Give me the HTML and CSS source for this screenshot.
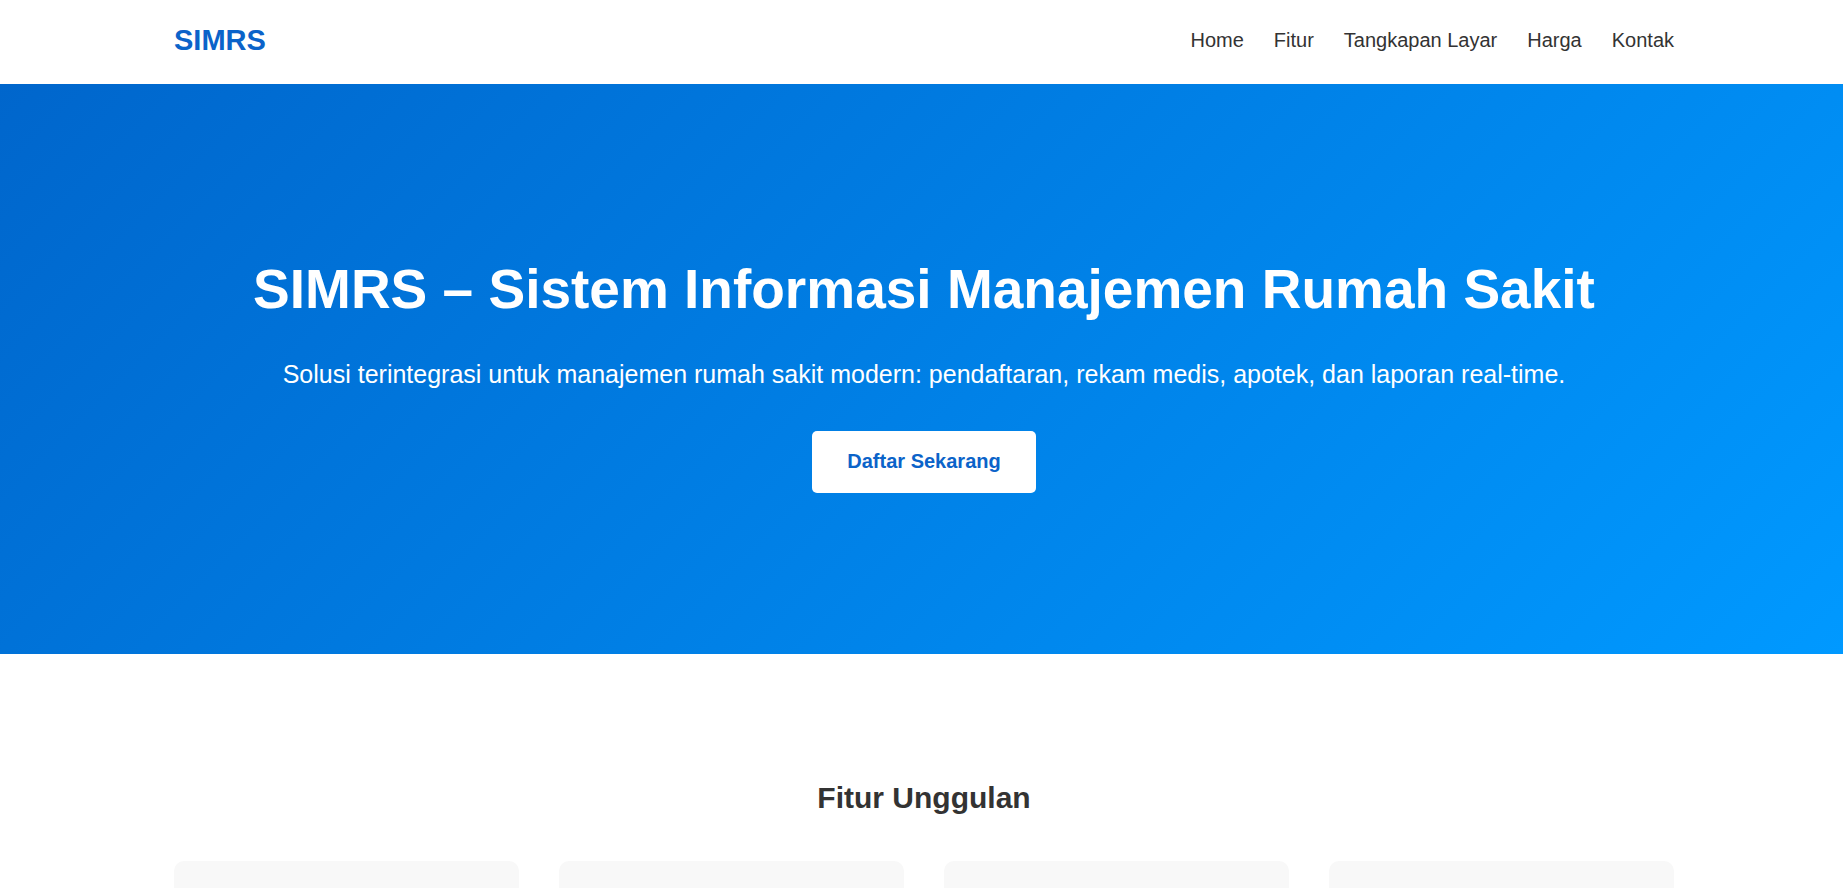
FILE: index.html
```html
<!DOCTYPE html>
<html lang="id">
<head>
<meta charset="utf-8">
<title>SIMRS – Sistem Informasi Manajemen Rumah Sakit</title>
<link rel="stylesheet" href="styles.css">
</head>
<body>
<header class="site-header">
  <div class="container header-inner">
    <a class="logo" href="#">SIMRS</a>
    <nav class="nav">
      <a href="#">Home</a>
      <a href="#">Fitur</a>
      <a href="#">Tangkapan Layar</a>
      <a href="#">Harga</a>
      <a href="#">Kontak</a>
    </nav>
  </div>
</header>
<section class="hero">
  <div class="container hero-inner">
    <h1 class="hero-title">SIMRS – Sistem Informasi Manajemen Rumah Sakit</h1>
    <p class="hero-sub">Solusi terintegrasi untuk manajemen rumah sakit modern: pendaftaran, rekam medis, apotek, dan laporan real-time.</p>
    <a class="btn" href="#">Daftar Sekarang</a>
  </div>
</section>
<section class="features">
  <div class="container">
    <h2 class="section-title">Fitur Unggulan</h2>
    <div class="feature-grid">
      <div class="card"><h3>Pendaftaran Pasien</h3><p>Registrasi pasien rawat jalan dan rawat inap dengan cepat.</p></div>
      <div class="card"><h3>Rekam Medis Elektronik</h3><p>Riwayat medis pasien tersimpan aman dan mudah diakses.</p></div>
      <div class="card"><h3>Manajemen Apotek</h3><p>Kelola stok obat, resep, dan transaksi farmasi.</p></div>
      <div class="card"><h3>Laporan Real-time</h3><p>Dashboard dan laporan operasional yang selalu terbaru.</p></div>
    </div>
  </div>
</section>
</body>
</html>
```
FILE: styles.css
```css
* { box-sizing: border-box; }
html, body { margin: 0; padding: 0; }
body {
  font-family: "Liberation Sans", Arial, sans-serif;
  color: #333;
  background: #fff;
}
a { text-decoration: none; }
.container {
  max-width: 1505px;
  padding-left: 5px;
  margin: 0 auto;
}
.site-header {
  background: #fff;
  height: 84px;
}
.header-inner {
  height: 100%;
  display: flex;
  align-items: center;
  justify-content: space-between;
  padding-bottom: 4px;
}
.logo {
  font-size: 29px;
  font-weight: bold;
  color: #0b63c9;
}
.nav {
  display: flex;
  gap: 30px;
}
.nav a {
  font-size: 20px;
  color: #333;
}
.hero {
  height: 570px;
  background: linear-gradient(135deg, #0066cc 0%, #0099ff 100%);
  color: #fff;
  padding-top: 172px;
}
.hero-inner {
  display: flex;
  flex-direction: column;
  align-items: center;
  text-align: center;
}
.hero-title {
  margin: 0;
  font-size: 55px;
  line-height: 67px;
  font-weight: bold;
}
.hero-sub {
  margin: 33px 0 0;
  font-size: 25px;
  line-height: 36px;
}
.btn {
  margin-top: 39px;
  display: inline-block;
  background: #fff;
  color: #0b63c9;
  font-weight: bold;
  font-size: 20px;
  padding: 19px 35px 20px;
  line-height: 23px;
  border-radius: 5px;
}
.features {
  padding-top: 126px;
}
.section-title {
  margin: 0;
  text-align: center;
  font-size: 30px;
  line-height: 36px;
  color: #333;
}
.feature-grid {
  margin-top: 45px;
  display: grid;
  grid-template-columns: repeat(4, 1fr);
  gap: 40px;
}
.card {
  background: #f8f8f8;
  border-radius: 10px;
  padding: 40px 30px;
}
.card h3 { margin: 0 0 10px; font-size: 22px; color: #0b63c9; }
.card p { margin: 0; font-size: 17px; line-height: 1.6; }
```
